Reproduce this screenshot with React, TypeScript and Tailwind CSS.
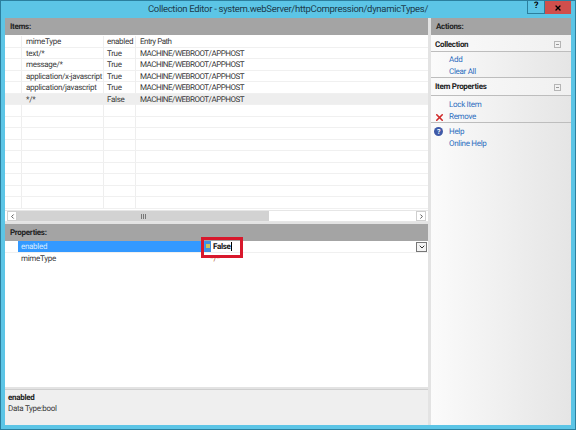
import { ChevronDown, ChevronLeft, ChevronRight, X } from "lucide-react";

const rows = [
  ["mimeType", "enabled", "Entry Path"],
  ["text/*", "True", "MACHINE/WEBROOT/APPHOST"],
  ["message/*", "True", "MACHINE/WEBROOT/APPHOST"],
  ["application/x-javascript", "True", "MACHINE/WEBROOT/APPHOST"],
  ["application/javascript", "True", "MACHINE/WEBROOT/APPHOST"],
  ["*/*", "False", "MACHINE/WEBROOT/APPHOST"],
  ["", "", ""],
  ["", "", ""],
  ["", "", ""],
  ["", "", ""],
  ["", "", ""],
  ["", "", ""],
  ["", "", ""],
  ["", "", ""],
  ["", "", ""],
];

function PaneHeader({ title }: { title: string }) {
  return (
    <div className="flex h-[17px] shrink-0 items-center bg-[#a4a4a4] pl-[5px] text-[8px] font-bold text-[#222]">
      {title}
    </div>
  );
}

function CollapseBox() {
  return (
    <div className="flex h-[7px] w-[7px] items-center justify-center border border-[#b5b5b5]">
      <div className="h-px w-[3px] bg-[#999]" />
    </div>
  );
}

function ActionGroup({ title, height }: { title: string; height: string }) {
  return (
    <div
      className={`flex items-center justify-between border-b border-[#bdbdbd] bg-gradient-to-r from-[#fafafa] to-[#f0f0f0] pl-[4px] pr-[10px] text-[8px] font-bold text-[#222] ${height}`}
    >
      {title}
      <CollapseBox />
    </div>
  );
}

function ActionLink({ label, icon }: { label: string; icon?: React.ReactNode }) {
  return (
    <div className="relative h-[12px] pl-[18px] text-[8px] leading-[12px] text-[#2f6fc0]">
      {icon}
      {label}
    </div>
  );
}

export default function App() {
  return (
    <div
      className="flex h-[430px] w-[576px] flex-col overflow-hidden border border-[#2b7f9e] bg-[#5cc5e6] text-[8px] tracking-[-0.3px] text-[#3a3a3a] [text-rendering:geometricPrecision]"
      style={{ fontFamily: 'Roboto, Lato, sans-serif' }}
    >
      <div className="flex h-[17px] shrink-0 items-start">
        <div className="flex-1 pl-[48px] pt-[1px] text-center text-[9.5px] leading-[16px] text-[#1d3c4c]">
          Collection Editor - system.webServer/httpCompression/dynamicTypes/
        </div>
        <div className="mr-[4px] flex">
          <div className="flex h-[13px] w-[18px] items-center justify-center border border-[#2b7f9e] border-t-0 text-[9px] font-bold text-black">
            ?
          </div>
          <div className="flex h-[13px] w-[26px] items-center justify-center bg-[#cf4f4c] text-black">
            <X size={8} strokeWidth={4} />
          </div>
        </div>
      </div>

      <div className="mx-[4px] mb-[4px] flex min-h-0 flex-1 bg-[#e3e3e3]">
        <div className="flex w-[423px] flex-col">
          <PaneHeader title="Items:" />
          <div className="flex h-[175px] flex-col overflow-hidden bg-white pt-px">
            {rows.map((row, i) => (
              <div
                key={i}
                className={`grid h-[11.5px] shrink-0 grid-cols-[17px_82px_32px_1fr] border-b border-[#f0f0f0] leading-[11px] ${
                  i === 5 ? "bg-[#eeeeee]" : ""
                }`}
              >
                <span className="border-r border-[#eeeeee]" />
                <span className="whitespace-nowrap border-r border-[#eeeeee] pl-[4px]">{row[0]}</span>
                <span className="border-r border-[#eeeeee] pl-[3px]">{row[1]}</span>
                <span className="pl-[4px] tracking-[-0.5px]">{row[2]}</span>
              </div>
            ))}
          </div>
          <div className="flex h-[12px] shrink-0 items-center border-y border-[#e6e6e6] bg-white pl-[2px] pr-[2px]">
            <div className="flex h-[10px] w-[10px] items-center justify-center border border-[#cfcfcf] text-[#444]">
              <ChevronLeft size={7} strokeWidth={3} />
            </div>
            <div className="flex h-[10px] w-[252px] items-center justify-center bg-[#d2d2d2]">
              <div className="h-[5px] w-[5px] bg-[repeating-linear-gradient(90deg,#777_0,#777_1px,#d2d2d2_1px,#d2d2d2_2px)]" />
            </div>
            <div className="flex-1" />
            <div className="flex h-[10px] w-[10px] items-center justify-center border border-[#cfcfcf] text-[#444]">
              <ChevronRight size={7} strokeWidth={3} />
            </div>
          </div>
          <div className="h-[2px] shrink-0 bg-[#e3e3e3]" />
          <PaneHeader title="Properties:" />
          <div className="flex flex-1 flex-col bg-white">
            <div className="relative flex h-[11.5px] items-center border-b border-[#f0f0f0] pl-[13px] leading-[11px]">
              <div className="flex h-full w-[187px] items-center bg-[#3399ff] pl-[3px] text-[#d5e9ff]">enabled</div>
              <div className="flex h-full w-[6px] items-center justify-center bg-[#3f8fe0]">
                <div className="h-[4px] w-[4px] bg-[#c9c45a]" />
              </div>
              <span className="pl-[2px] font-bold text-[#111]">False</span>
              <span className="h-[9px] w-px bg-black" />
              <div className="absolute right-[1px] top-[1px] flex h-[10px] w-[11px] items-center justify-center border border-[#777] bg-[#f4f4f4] text-[#333]">
                <ChevronDown size={8} strokeWidth={3} />
              </div>
              <div className="absolute left-[196px] top-[-4px] h-[21px] w-[42px] border-[3px] border-[#d8182c]" />
            </div>
            <div className="flex h-[12px] items-center pl-[16px] leading-[11px]">
              <span className="w-[186px]">mimeType</span>
              <span className="pl-[1px] text-[#b5651d]">"*/*"</span>
            </div>
          </div>
          <div className="mt-[2px] h-[36px] shrink-0 border-t border-[#cfcfcf] bg-[#efefef] pl-[3px] pt-[2px] leading-[11px]">
            <div className="font-bold text-[#222]">enabled</div>
            <div>Data Type:bool</div>
          </div>
        </div>

        <div className="w-[3px] shrink-0 bg-[#e3e3e3]" />

        <div className="flex flex-1 flex-col bg-gradient-to-r from-[#fbfbfb] to-[#e5e5e5]">
          <PaneHeader title="Actions:" />
          <ActionGroup title="Collection" height="h-[17px] pt-[3px]" />
          <div className="flex h-[26px] flex-col justify-center border-b border-[#bdbdbd] pt-[2px]">
            <ActionLink label="Add" />
            <ActionLink label="Clear All" />
          </div>
          <ActionGroup title="Item Properties" height="h-[18px] pt-px" />
          <div className="flex h-[27px] flex-col justify-center border-b border-[#bdbdbd] pt-[3px]">
            <ActionLink label="Lock Item" />
            <ActionLink
              label="Remove"
              icon={<X size={11} strokeWidth={3.5} className="absolute left-[3px] top-[1px] text-[#d02a2a]" />}
            />
          </div>
          <div className="flex flex-col pt-[3px]">
            <ActionLink
              label="Help"
              icon={
                <span className="absolute left-[3px] top-[1px] flex h-[9px] w-[9px] items-center justify-center rounded-full bg-[#3f5aa8] text-[7px] font-bold text-white">
                  ?
                </span>
              }
            />
            <ActionLink label="Online Help" />
          </div>
        </div>
      </div>
    </div>
  );
}
